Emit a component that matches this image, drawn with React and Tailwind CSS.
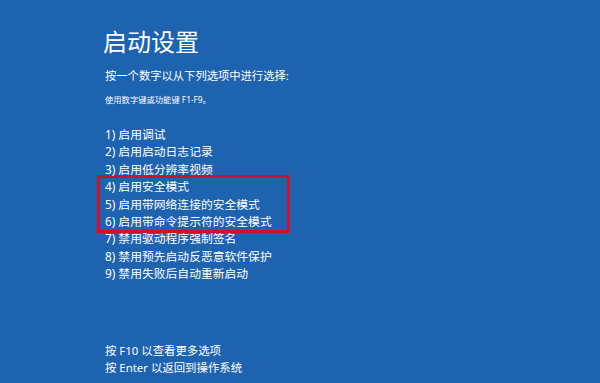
import React from 'react';

const options = [
  '1) 启用调试',
  '2) 启用启动日志记录',
  '3) 启用低分辨率视频',
  '4) 启用安全模式',
  '5) 启用带网络连接的安全模式',
  '6) 启用带命令提示符的安全模式',
  '7) 禁用驱动程序强制签名',
  '8) 禁用预先启动反恶意软件保护',
  '9) 禁用失败后自动重新启动',
];

function Option({ text }) {
  return <li className="h-[17.4px] leading-[17.4px] whitespace-nowrap">{text}</li>;
}

export default function App() {
  const before = options.slice(0, 3);
  const marked = options.slice(3, 6);
  const after = options.slice(6);

  return (
    <div
      className="w-[600px] h-[383px] bg-[#1e63b0] text-white flex flex-col pl-[103px] pt-[27px] pb-[7px] overflow-hidden"
      style={{ fontFamily: '"Noto Sans", "Noto Sans CJK SC", sans-serif' }}
    >
      {/* Header */}
      <h1 className="text-[24px] leading-[30px] font-normal">启动设置</h1>
      <p className="mt-[11px] text-[11.3px] leading-[16px] pl-[2px]">
        按一个数字以从下列选项中进行选择:
      </p>
      <p className="mt-[10px] text-[8.3px] leading-[12px] pl-[2px]">使用数字键或功能键 F1-F9。</p>

      {/* Options */}
      <ul className="mt-[20px] text-[11.8px] pl-[2px]">
        {before.map(t => <Option key={t} text={t} />)}
        <li className="-my-[3px] -ml-[8px] w-[193px] border-[3px] border-[#d0112b] pl-[5px]">
          <ul>
            {marked.map(t => <Option key={t} text={t} />)}
          </ul>
        </li>
        {after.map(t => <Option key={t} text={t} />)}
      </ul>

      {/* Footer */}
      <div className="mt-auto text-[11.4px] leading-[17px] pl-[2px]">
        <p>按 F10 以查看更多选项</p>
        <p>按 Enter 以返回到操作系统</p>
      </div>
    </div>
  );
}
